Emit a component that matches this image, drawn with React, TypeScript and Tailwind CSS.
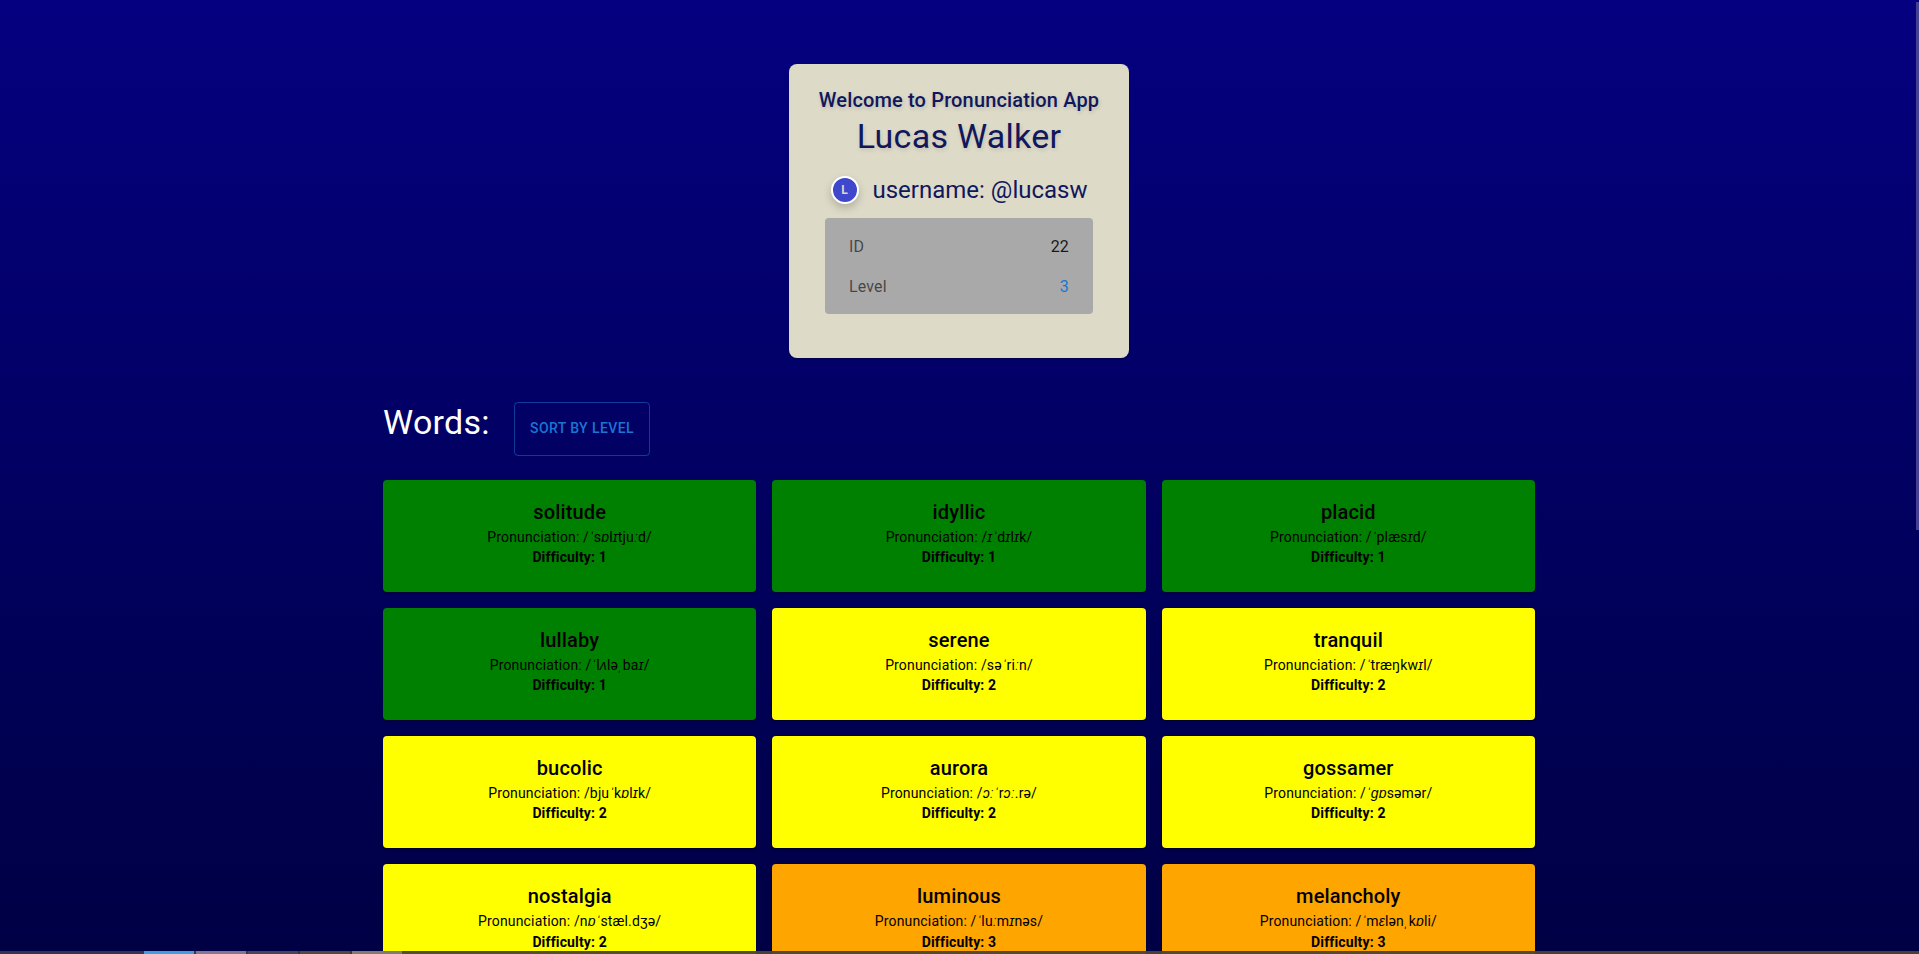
type Word = { word: string; ipa: string; level: 1 | 2 | 3 };

const words: Word[] = [
  { word: "solitude", ipa: "/ˈsɒlɪtjuːd/", level: 1 },
  { word: "idyllic", ipa: "/ɪˈdɪlɪk/", level: 1 },
  { word: "placid", ipa: "/ˈplæsɪd/", level: 1 },
  { word: "lullaby", ipa: "/ˈlʌləˌbaɪ/", level: 1 },
  { word: "serene", ipa: "/səˈriːn/", level: 2 },
  { word: "tranquil", ipa: "/ˈtræŋkwɪl/", level: 2 },
  { word: "bucolic", ipa: "/bjuˈkɒlɪk/", level: 2 },
  { word: "aurora", ipa: "/ɔːˈrɔː.rə/", level: 2 },
  { word: "gossamer", ipa: "/ˈɡɒsəmər/", level: 2 },
  { word: "nostalgia", ipa: "/nɒˈstæl.dʒə/", level: 2 },
  { word: "luminous", ipa: "/ˈluːmɪnəs/", level: 3 },
  { word: "melancholy", ipa: "/ˈmɛlənˌkɒli/", level: 3 },
];

const levelColors = {
  1: "bg-[#008000]",
  2: "bg-[#ffff00]",
  3: "bg-[#ffa500]",
};

// Phonetic symbols set in italics; the remaining letters stay upright.
function Ipa({ text }: { text: string }) {
  return (
    <>
      {text.split(/([ɪɒʌɔɛɡːˈˌ]+)/).map((part, i) =>
        i % 2 === 1 ? (
          <i key={i} className="leading-none">
            {part}
          </i>
        ) : (
          part
        ),
      )}
    </>
  );
}

function WordCard({ word, ipa, level }: Word) {
  return (
    <article
      className={`h-[112.05px] rounded-[4px] px-4 pt-4 text-center text-black shadow-[0_2px_1px_-1px_rgba(0,0,0,0.2),0_1px_1px_rgba(0,0,0,0.14),0_1px_3px_rgba(0,0,0,0.12)] ${levelColors[level]}`}
    >
      <h2 className="h-[31.35px] text-xl leading-8 font-medium tracking-[0.0075em]">{word}</h2>
      <p className="h-[20.05px] text-sm leading-5 tracking-[0.01071em]">
        Pronunciation: <Ipa text={ipa} />
      </p>
      <p className="text-sm leading-5 font-bold tracking-[0.01071em]">Difficulty: {level}</p>
    </article>
  );
}

function ProfileCard() {
  return (
    <section className="mx-auto h-[294px] w-[340px] rounded-lg bg-[#dddac8] pt-5 text-center text-[#10175c] shadow-[0_2px_1px_-1px_rgba(0,0,0,0.2),0_1px_3px_rgba(0,0,0,0.12)]">
      <h1 className="text-xl leading-8 font-medium tracking-[0.0075em] [text-shadow:1px_2px_4px_rgba(0,0,0,0.15)]">
        Welcome to Pronunciation App
      </h1>
      <p className="text-[34px] leading-10 tracking-[0.00735em] [text-shadow:1px_2px_4px_rgba(0,0,0,0.12)]">Lucas Walker</p>
      <div className="mt-[18px] flex items-center justify-center gap-[14px]">
        <span className="flex size-7 items-center justify-center rounded-full border-2 border-white bg-[#3f48cc] text-xs font-bold text-[#dddac8] shadow-[0_4px_8px_rgba(0,0,0,0.2)]">
          L
        </span>
        <span className="text-2xl leading-8">username: @lucasw</span>
      </div>
      <dl className="mx-auto mt-3 flex h-24 w-[268px] flex-col gap-4 rounded-[4px] bg-[#a9a9a9] px-6 pt-[17px] text-base leading-6 tracking-[0.00938em]">
        <div className="flex justify-between">
          <dt className="text-black/60">ID</dt>
          <dd className="text-black/87">22</dd>
        </div>
        <div className="flex justify-between">
          <dt className="text-black/60">Level</dt>
          <dd className="text-[#1976d2]">3</dd>
        </div>
      </dl>
    </section>
  );
}

export default function App() {
  return (
    <div className="relative h-[954px] overflow-hidden bg-linear-to-b from-[#050080] to-[#000045] pt-16 pr-px font-[Roboto,sans-serif]">
      <ProfileCard />
      <main className="mx-auto w-[1152px] pt-11">
        <header className="flex h-[54px] items-start">
          <h2 className="w-[131px] text-[34px] leading-10 tracking-[0.00735em] text-white">Words:</h2>
          <button className="h-[54px] w-[136px] rounded-[4px] border border-[#1976d2]/50 pb-[2px] text-sm font-medium tracking-[0.02857em] whitespace-nowrap text-[#1976d2] uppercase">
            Sort by level
          </button>
        </header>
        <div className="mt-6 grid grid-cols-3 gap-4">
          {words.map((item) => (
            <WordCard key={item.word} {...item} />
          ))}
        </div>
      </main>
      <div className="absolute top-[2px] right-0 h-[528px] w-[3px] bg-[#464090]" />
      <div className="absolute inset-x-0 bottom-0 flex h-[3px] bg-[#4a4436]/95">
        <span className="w-[144px] bg-[#343450]" />
        <span className="w-[50px] bg-[#3ca0dc]" />
        <span className="w-[2px] bg-[#343450]" />
        <span className="w-[50px] bg-[#80788c]" />
        <span className="w-[2px] bg-[#343450]" />
        <span className="w-[50px] bg-[#48445a]" />
        <span className="w-[2px] bg-[#343440]" />
        <span className="w-[50px] bg-[#4e4a3e]" />
        <span className="w-[2px] bg-[#3a3a30]" />
        <span className="w-[50px] bg-[#807c6c]" />
      </div>
    </div>
  );
}
